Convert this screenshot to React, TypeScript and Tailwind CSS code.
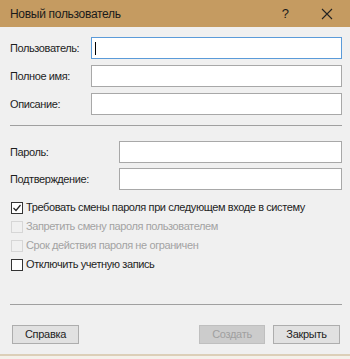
const font = { fontFamily: '"Liberation Sans", Arial, sans-serif' };

function Field({ label, inputX, first }: { label: string; inputX: string; first?: boolean }) {
  return (
    <div className="flex h-[22px] items-center">
      <div className={`${inputX} shrink-0 pl-[10px] text-[11px] tracking-[-0.4px] text-[#1e1e1e]`}>{label}</div>
      <div
        className={`flex h-full flex-1 items-center border bg-white ${
          first ? "border-[#5b9bd9]" : "border-[#a8a8a8]"
        }`}
      >
        {first && <div className="ml-[3px] h-[13px] w-px bg-black" />}
      </div>
    </div>
  );
}

function Check({ label, checked, disabled }: { label: string; checked?: boolean; disabled?: boolean }) {
  return (
    <div className="flex h-[19px] items-center pl-[11px]">
      <div
        className={`flex h-[12px] w-[12px] items-center justify-center border ${
          disabled ? "border-[#d6d6d6] bg-[#f0f0f0]" : "border-[#333333] bg-white"
        }`}
      >
        {checked && (
          <svg width="10" height="10" viewBox="0 0 10 10">
            <path d="M1.5 5 L4 7.5 L8.5 2" fill="none" stroke="#222" strokeWidth="1.2" />
          </svg>
        )}
      </div>
      <span
        className={`ml-[3px] text-[11px] tracking-[-0.4px] ${disabled ? "text-[#a3a3a3]" : "text-[#1e1e1e]"}`}
      >
        {label}
      </span>
    </div>
  );
}

export default function App() {
  return (
    <div className="flex h-[359px] w-[350px] flex-col bg-[#f4f1ea]" style={font}>
      <div className="flex h-[27px] shrink-0 items-center bg-[#c59b61] pl-[10px] text-[12px] text-[#1a1a1a]">
        <span className="tracking-[-0.3px]">Новый пользователь</span>
        <span className="ml-auto mr-[32px] text-[13px]">?</span>
        <svg className="mr-[17px]" width="12" height="12" viewBox="0 0 12 12">
          <path d="M1 1 L11 11 M11 1 L1 11" stroke="#222" strokeWidth="1.1" />
        </svg>
      </div>
      <div className="flex h-[327px] shrink-0 flex-col bg-[#f0f0f0] pr-[8px]">
        <div className="mt-[10px] flex flex-col gap-[6px]">
          <Field label="Пользователь:" inputX="w-[91px]" first />
          <Field label="Полное имя:" inputX="w-[91px]" />
          <Field label="Описание:" inputX="w-[91px]" />
        </div>
        <div className="ml-[10px] mt-[10px] h-[2px] border-t border-[#a0a0a0] border-b-white" />
        <div className="mt-[14px] flex flex-col gap-[5px]">
          <Field label="Пароль:" inputX="w-[119px]" />
          <Field label="Подтверждение:" inputX="w-[119px]" />
        </div>
        <div className="mt-[8px] flex flex-col">
          <Check label="Требовать смены пароля при следующем входе в систему" checked />
          <Check label="Запретить смену пароля пользователем" disabled />
          <Check label="Срок действия пароля не ограничен" disabled />
          <Check label="Отключить учетную запись" />
        </div>
        <div className="ml-[10px] mt-[30px] h-[2px] border-t border-[#a0a0a0] border-b-white" />
        <div className="mt-[19px] flex items-center pl-[12px] pr-[2px] text-[11px] tracking-[-0.3px]">
          <div className="flex h-[19px] w-[67px] items-center justify-center border border-[#adadad] bg-[#e1e1e1] text-[#1e1e1e]">
            Справка
          </div>
          <div className="ml-auto flex h-[19px] w-[66px] items-center justify-center border border-[#bfbfbf] bg-[#cccccc] text-[#a0a0a0]">
            Создать
          </div>
          <div className="ml-[8px] flex h-[19px] w-[67px] items-center justify-center border border-[#adadad] bg-[#e1e1e1] text-[#1e1e1e]">
            Закрыть
          </div>
        </div>
      </div>
      <div className="h-[2px] bg-[#dccfb8]" />
    </div>
  );
}
